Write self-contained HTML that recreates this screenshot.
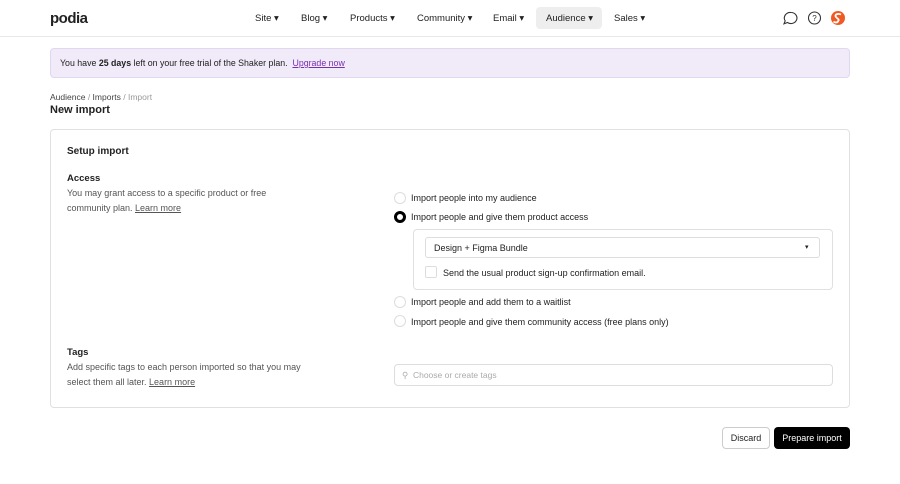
<!DOCTYPE html>
<html><head><style>
*{box-sizing:border-box;margin:0;padding:0}
body{width:900px;height:484px;background:#fff;font-family:"Liberation Sans",sans-serif;color:#222;position:relative;overflow:hidden;font-size:9px}
.a{position:absolute}
.nav span{position:absolute;top:13px;font-size:9.5px;color:#222}
.radio{position:absolute;width:12px;height:12px;border:1px solid #ddd;border-radius:50%}
.rl{position:absolute;font-size:9px;color:#222}
</style></head><body>
<div class="a" style="left:50px;top:10px;font-size:15px;font-weight:bold;letter-spacing:-0.5px">podia</div>
<div class="nav">
<span style="left:255px">Site ▾</span>
<span style="left:301px">Blog ▾</span>
<span style="left:350px">Products ▾</span>
<span style="left:417px">Community ▾</span>
<span style="left:493px">Email ▾</span>
<div class="a" style="left:536px;top:7px;width:66px;height:22px;background:#eee;border-radius:4px"></div>
<span style="left:546px">Audience ▾</span>
<span style="left:614px">Sales ▾</span>
</div>
<svg class="a" style="left:782px;top:10px" width="68" height="16">
<path d="M9 2.5a6 5.5 0 1 1-3.5 10l-3.5 1.3 1.2-3A6 5.5 0 0 1 9 2.5z" fill="none" stroke="#333" stroke-width="1.1"/>
<circle cx="32.5" cy="8" r="6" fill="none" stroke="#333" stroke-width="1.1"/>
<text x="32.5" y="11" font-size="8" text-anchor="middle" fill="#333" font-family="Liberation Sans">?</text>
<circle cx="56" cy="8" r="7" fill="#f05a22"/>
<path d="M59 4.5c-3-1.5-7 0-5 2.5s4 2 1.5 5c-1 .8-3 .5-4-.5" fill="none" stroke="#fff" stroke-width="1.8"/>
</svg>
<div class="a" style="left:0;top:36px;width:900px;height:1px;background:#e8e8e8"></div>
<div class="a" style="left:50px;top:48px;width:800px;height:30px;background:#f1eaf9;border:1px solid #e2d7f0;border-radius:4px"></div>
<div class="a" style="left:60px;top:58px;font-size:8.8px">You have <b>25 days</b> left on your free trial of the Shaker plan. &nbsp;<u style="color:#7a2fb0">Upgrade now</u></div>
<div class="a" style="left:50px;top:92px;font-size:8.5px;color:#444">Audience <span style="color:#999">/</span> Imports <span style="color:#999">/ Import</span></div>
<div class="a" style="left:50px;top:104px;font-size:11px;font-weight:bold">New import</div>
<div class="a" style="left:50px;top:129px;width:800px;height:279px;border:1px solid #e0e0e0;border-radius:4px"></div>
<div class="a" style="left:67px;top:146px;font-size:10px;font-weight:bold">Setup import</div>
<div class="a" style="left:67px;top:173px;font-size:9.5px;font-weight:bold">Access</div>
<div class="a" style="left:67px;top:186px;font-size:9px;color:#555;line-height:15px;width:230px">You may grant access to a specific product or free community plan. <u>Learn more</u></div>
<div class="radio" style="left:394px;top:192px"></div><div class="rl" style="left:411px;top:193px">Import people into my audience</div>
<div class="radio" style="left:394px;top:211px;border:3px solid #000"></div><div class="rl" style="left:411px;top:212px">Import people and give them product access</div>
<div class="a" style="left:413px;top:229px;width:420px;height:61px;border:1px solid #e0e0e0;border-radius:4px"></div>
<div class="a" style="left:425px;top:237px;width:395px;height:21px;border:1px solid #ddd;border-radius:3px"></div>
<div class="a" style="left:434px;top:243px;font-size:9px">Design + Figma Bundle</div>
<div class="a" style="left:805px;top:243px;font-size:7px">▾</div>
<div class="a" style="left:425px;top:266px;width:12px;height:12px;border:1px solid #ddd;border-radius:2px"></div>
<div class="rl" style="left:443px;top:268px">Send the usual product sign-up confirmation email.</div>
<div class="radio" style="left:394px;top:296px"></div><div class="rl" style="left:411px;top:297px">Import people and add them to a waitlist</div>
<div class="radio" style="left:394px;top:315px"></div><div class="rl" style="left:411px;top:317px">Import people and give them community access (free plans only)</div>
<div class="a" style="left:67px;top:347px;font-size:9.5px;font-weight:bold">Tags</div>
<div class="a" style="left:67px;top:360px;font-size:9px;color:#555;line-height:15px;width:245px">Add specific tags to each person imported so that you may select them all later. <u>Learn more</u></div>
<div class="a" style="left:394px;top:364px;width:439px;height:22px;border:1px solid #ddd;border-radius:4px"></div>
<div class="a" style="left:402px;top:370px;font-size:8.5px;color:#aaa">⚲ &nbsp;Choose or create tags</div>
<div class="a" style="left:722px;top:427px;width:48px;height:22px;border:1px solid #ccc;border-radius:4px;font-size:9px;text-align:center;line-height:20px">Discard</div>
<div class="a" style="left:774px;top:427px;width:76px;height:22px;background:#000;color:#fff;border-radius:4px;font-size:9px;text-align:center;line-height:22px">Prepare import</div>
</body></html>
